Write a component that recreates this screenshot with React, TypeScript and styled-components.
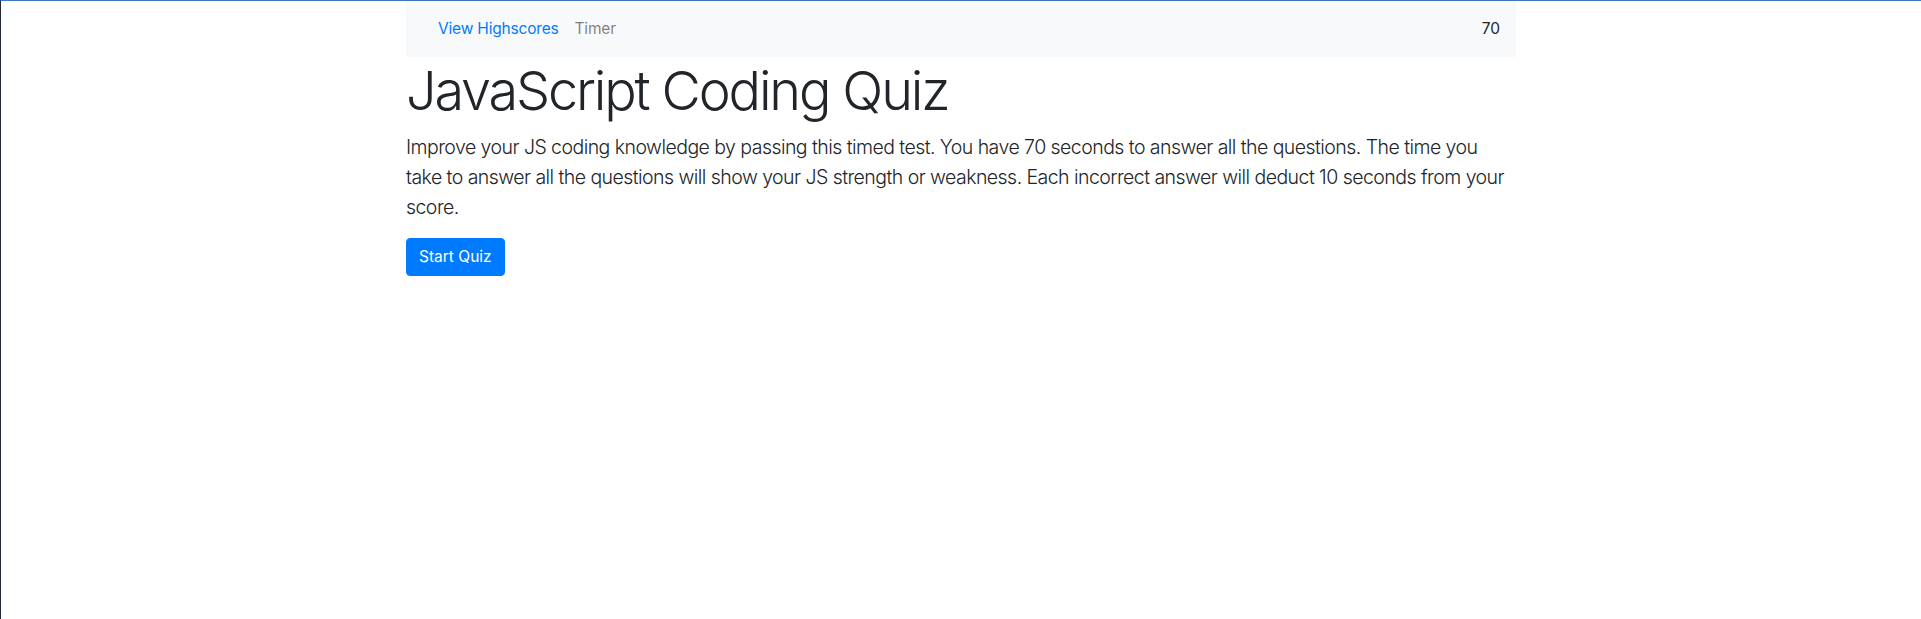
import React from "react";
import styled, { createGlobalStyle } from "styled-components";

const GlobalStyle = createGlobalStyle`
  html, body {
    margin: 0;
    padding: 0;
    background: #ffffff;
  }
  body {
    font-family: Inter, "Noto Sans", "Liberation Sans", sans-serif;
    font-size: 15.5px;
    line-height: 1.5;
    color: #212529;
  }
  *, *::before, *::after { box-sizing: border-box; }
`;

const Frame = styled.div`
  min-height: 100vh;
  border-top: 1px solid #3f76b9;
  border-left: 1px solid #1f2833;
`;

const Container = styled.div`
  width: 100%;
  max-width: 1140px;
  margin: 0 auto;
  padding: 0 15px;
`;

const Navbar = styled.nav`
  display: flex;
  align-items: center;
  justify-content: space-between;
  background: #f8f9fa;
  padding: 8px 16px 8px 24px;
`;

const NavList = styled.div`
  display: flex;
  align-items: center;
`;

const NavLink = styled.a<{ $muted?: boolean }>`
  display: block;
  padding: 8px;
  line-height: 24px;
  font-size: 15.5px;
  letter-spacing: -0.012em;
  color: ${(p) => (p.$muted ? "rgba(0,0,0,0.5)" : "#007bff")};
  text-decoration: none;
  cursor: pointer;
`;

const TimerValue = styled.span`
  line-height: 24px;
  padding: 8px 0;
  font-size: 15.5px;
  color: #212529;
`;

const Title = styled.h1`
  margin: 0 0 8px;
  font-size: 54px;
  font-weight: 300;
  line-height: 67px;
  letter-spacing: -0.04em;
  color: #212529;
`;

const Lead = styled.p`
  margin: 0 0 16px;
  font-size: 19.5px;
  font-weight: 300;
  line-height: 30px;
  letter-spacing: -0.028em;
  color: #212529;
`;

const Button = styled.button`
  display: inline-block;
  font-family: inherit;
  font-size: 15.5px;
  font-weight: 400;
  line-height: 24px;
  padding: 6px 12px;
  border: 1px solid #007bff;
  border-radius: 4px;
  background: #007bff;
  color: #ffffff;
  cursor: pointer;
`;

export default function App() {
  return (
    <>
      <GlobalStyle />
      <Frame>
        <Container>
          <Navbar>
            <NavList>
              <NavLink>View Highscores</NavLink>
              <NavLink $muted>Timer</NavLink>
            </NavList>
            <TimerValue>70</TimerValue>
          </Navbar>
          <Title>JavaScript Coding Quiz</Title>
          <Lead>
            Improve your JS coding knowledge by passing this timed test. You have 70 seconds to
            answer all the questions. The time you take to answer all the questions will show your
            JS strength or weakness. Each incorrect answer will deduct 10 seconds from your score.
          </Lead>
          <Button>Start Quiz</Button>
        </Container>
      </Frame>
    </>
  );
}
